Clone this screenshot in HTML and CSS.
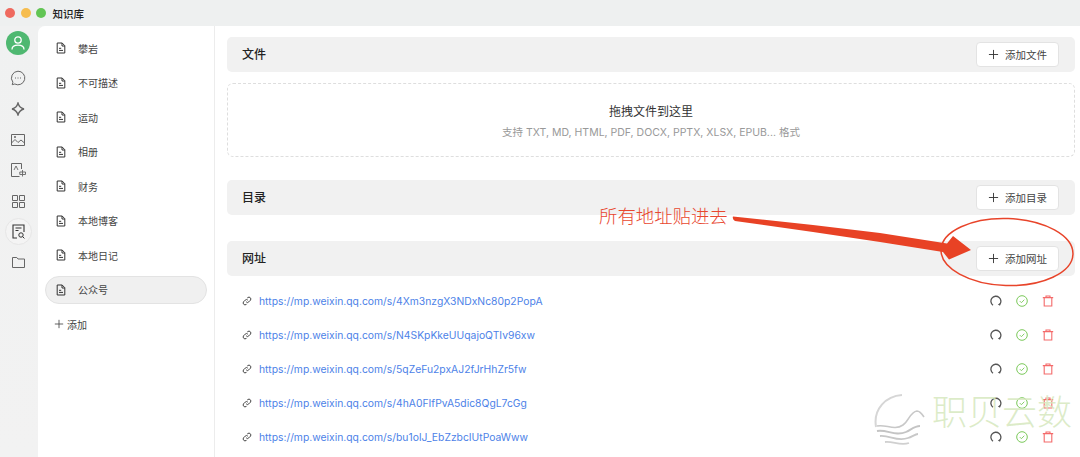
FILE: index.html
```html
<!DOCTYPE html>
<html lang="zh-CN">
<head>
    <meta charset="UTF-8">
    <meta name="viewport" content="width=device-width, initial-scale=1.0">
    <title>知识库</title>
    <link rel="stylesheet" href="styles.css">
</head>
<body>
    <svg width="0" height="0" class="defs">
        <symbol id="doc" viewBox="0 0 12 12">
            <path d="M2.200 1h5l2.600 2.700V11H2.200z M7 1v3h2.800 M4 6.300h2.200 M4 8.400h4" fill="none" stroke="currentColor" stroke-width="1"/>
        </symbol>
        <symbol id="plus" viewBox="0 0 12 12">
            <path d="M6 1v10M1 6h10" fill="none" stroke="currentColor" stroke-width="1"/>
        </symbol>
        <symbol id="link" viewBox="0 0 12 12">
            <path d="M5 7a2.200 2.200 0 0 0 3.200 0l2-2A2.300 2.300 0 0 0 7 1.800l-.8.8M7 5a2.200 2.200 0 0 0-3.200 0l-2 2A2.300 2.300 0 0 0 5 10.200l.8-.8" fill="none" stroke="currentColor" stroke-width="1.200"/>
        </symbol>
        <symbol id="retry" viewBox="0 0 12 12">
            <path d="M3 10.300A5 5 0 1 1 9.600 9.600" fill="none" stroke="currentColor" stroke-width="1.300"/>
            <path d="M7.800 9.400l2.300 1.300.3-2.600z" fill="currentColor"/>
        </symbol>
        <symbol id="ok" viewBox="0 0 12 12">
            <circle cx="6" cy="6" r="5.300" fill="none" stroke="currentColor" stroke-width="1"/>
            <path d="M3.800 6.100l1.600 1.600 2.900-3" fill="none" stroke="currentColor" stroke-width="0.900"/>
        </symbol>
        <symbol id="trash" viewBox="0 0 12 12">
            <path d="M.8 2.600h10.400M4 2.500V1h4v1.500M2.200 2.600V11h7.600V2.600" fill="none" stroke="currentColor" stroke-width="1.100"/>
        </symbol>
    </svg>

    <header class="titlebar">
        <span class="light red"></span>
        <span class="light yellow"></span>
        <span class="light green"></span>
        <span class="app-title">知识库</span>
    </header>

    <div class="app">
        <nav class="rail">
            <div class="avatar">
                <svg width="16" height="16" viewBox="0 0 16 16"><circle cx="8" cy="5" r="3.200" fill="none" stroke="#fff" stroke-width="1.300"/><path d="M2 14.500c0-3 2.500-4.300 6-4.300s6 1.300 6 4.300" fill="none" stroke="#fff" stroke-width="1.300"/></svg>
            </div>
            <div class="rail-btn">
                <svg width="16" height="16" viewBox="0 0 16 16"><path d="M8 1.200a6.800 6.800 0 1 1-3.200 12.800l-2.600.7.700-2.500A6.800 6.800 0 0 1 8 1.200z" fill="none" stroke="currentColor"/><path d="M5 8h1M7.500 8h1M10 8h1" stroke="currentColor"/></svg>
            </div>
            <div class="rail-btn">
                <svg width="14" height="14" viewBox="0 0 14 14"><path d="M7 1c.8 3 2.600 5.200 6 6-3.400.8-5.200 3-6 6-.8-3-2.600-5.200-6-6 3.400-.8 5.200-3 6-6z" fill="none" stroke="currentColor" stroke-width="1.300"/></svg>
            </div>
            <div class="rail-btn">
                <svg width="14" height="12" viewBox="0 0 14 12"><path d="M.5.500h13v11H.5z M.5 9l3.500-3.500 3 3 3-2.500 3.500 3" fill="none" stroke="currentColor"/><circle cx="4" cy="3" r="1" fill="currentColor"/></svg>
            </div>
            <div class="rail-btn">
                <svg width="15" height="14" viewBox="0 0 15 14"><path d="M10.500 6V.5H.5v13h8" fill="none" stroke="currentColor"/><path d="M3 7l2-4 2 4M11.500 7v6.500M8.800 9h5.700v2.500H8.800z" fill="none" stroke="currentColor" stroke-width="0.900"/></svg>
            </div>
            <div class="rail-btn">
                <svg width="13" height="13" viewBox="0 0 13 13"><path d="M.5.500h5v5h-5z M7.500.500h5v5h-5z M.5 7.500h5v5h-5z M7.500 7.500h5v5h-5z" fill="none" stroke="currentColor"/></svg>
            </div>
            <div class="rail-btn active">
                <svg width="13" height="15" viewBox="0 0 13 15"><path d="M5 14H1V1h11v7M3.500 4h6M3.500 6.500h3" fill="none" stroke="currentColor" stroke-width="1.100"/><circle cx="9" cy="11" r="2.200" fill="none" stroke="currentColor"/><path d="M10.600 12.600l1.800 1.800" stroke="currentColor"/></svg>
            </div>
            <div class="rail-btn">
                <svg width="13" height="11" viewBox="0 0 13 11"><path d="M.5.500h4.300l1.200 1.500h6.500v8.500H.5z" fill="none" stroke="currentColor"/></svg>
            </div>
        </nav>

        <aside class="sidebar">
            <div class="kb-item"><svg class="doc-icon"><use href="#doc"/></svg>攀岩</div>
            <div class="kb-item"><svg class="doc-icon"><use href="#doc"/></svg>不可描述</div>
            <div class="kb-item"><svg class="doc-icon"><use href="#doc"/></svg>运动</div>
            <div class="kb-item"><svg class="doc-icon"><use href="#doc"/></svg>相册</div>
            <div class="kb-item"><svg class="doc-icon"><use href="#doc"/></svg>财务</div>
            <div class="kb-item"><svg class="doc-icon"><use href="#doc"/></svg>本地博客</div>
            <div class="kb-item"><svg class="doc-icon"><use href="#doc"/></svg>本地日记</div>
            <div class="kb-item selected"><svg class="doc-icon"><use href="#doc"/></svg>公众号</div>
            <div class="kb-add"><svg class="add-icon"><use href="#plus"/></svg>添加</div>
        </aside>

        <main class="content">
            <section class="section-head">
                <h2>文件</h2>
                <button class="add-btn"><svg class="add-icon"><use href="#plus"/></svg>添加文件</button>
            </section>
            <div class="dropzone">
                <p class="drop-title">拖拽文件到这里</p>
                <p class="drop-hint">支持 TXT, MD, HTML, PDF, DOCX, PPTX, XLSX, EPUB... 格式</p>
            </div>

            <section class="section-head dir-head">
                <h2>目录</h2>
                <button class="add-btn"><svg class="add-icon"><use href="#plus"/></svg>添加目录</button>
            </section>

            <section class="section-head url-head">
                <h2>网址</h2>
                <button class="add-btn"><svg class="add-icon"><use href="#plus"/></svg>添加网址</button>
            </section>
            <ul class="url-list">
                <li class="url-row">
                    <svg class="link-icon"><use href="#link"/></svg>
                    <a class="url" href="#">https://mp.weixin.qq.com/s/4Xm3nzgX3NDxNc80p2PopA</a>
                    <svg class="act retry"><use href="#retry"/></svg>
                    <svg class="act ok"><use href="#ok"/></svg>
                    <svg class="act trash"><use href="#trash"/></svg>
                </li>
                <li class="url-row">
                    <svg class="link-icon"><use href="#link"/></svg>
                    <a class="url" href="#">https://mp.weixin.qq.com/s/N4SKpKkeUUqajoQTIv96xw</a>
                    <svg class="act retry"><use href="#retry"/></svg>
                    <svg class="act ok"><use href="#ok"/></svg>
                    <svg class="act trash"><use href="#trash"/></svg>
                </li>
                <li class="url-row">
                    <svg class="link-icon"><use href="#link"/></svg>
                    <a class="url" href="#">https://mp.weixin.qq.com/s/5qZeFu2pxAJ2fJrHhZr5fw</a>
                    <svg class="act retry"><use href="#retry"/></svg>
                    <svg class="act ok"><use href="#ok"/></svg>
                    <svg class="act trash"><use href="#trash"/></svg>
                </li>
                <li class="url-row">
                    <svg class="link-icon"><use href="#link"/></svg>
                    <a class="url" href="#">https://mp.weixin.qq.com/s/4hA0FIfPvA5dic8QgL7cGg</a>
                    <svg class="act retry"><use href="#retry"/></svg>
                    <svg class="act ok"><use href="#ok"/></svg>
                    <svg class="act trash"><use href="#trash"/></svg>
                </li>
                <li class="url-row">
                    <svg class="link-icon"><use href="#link"/></svg>
                    <a class="url" href="#">https://mp.weixin.qq.com/s/bu1olJ_EbZzbcIUtPoaWww</a>
                    <svg class="act retry"><use href="#retry"/></svg>
                    <svg class="act ok"><use href="#ok"/></svg>
                    <svg class="act trash"><use href="#trash"/></svg>
                </li>
            </ul>
        </main>
    </div>

    <!-- red note drawn over the screenshot -->
    <span class="note">所有地址贴进去</span>
    <svg class="overlay" width="1080" height="457" viewBox="0 0 1080 457">
        <ellipse cx="1007" cy="252" rx="66" ry="33.500" fill="none" stroke="#e8442a" stroke-width="1.500" transform="rotate(2 1007 252)"/>
        <path d="M733 216.500L813 225L880 233L947 243.500L953 236L971 250L949 259.500L943 252L880 242L813 232L735 221Q732 219 733 216.500z" fill="#e84225"/>
    </svg>

    <!-- watermark -->
    <div class="watermark">
        <svg class="wm-logo" width="52" height="58" viewBox="0 0 52 58">
            <circle cx="26" cy="29" r="26" fill="#fff" opacity="0.92"/>
            <path d="M2 34C-1 16 12 3 28 2" fill="none" stroke="#d6d6d6" stroke-width="2"/>
            <path d="M3 33c9-2 17 5 26-1 6-4 7-13 14-14 3 0 5 3 7 6" fill="none" stroke="#c8c8c8" stroke-width="1.600"/>
            <path d="M3 38c10-2 18 6 29 1 5-2 8-6 14-6" fill="none" stroke="#c4c4c4" stroke-width="1.800"/>
            <path d="M6 43c10-1 17 6 28 2 4-1 7-4 10-4" fill="none" stroke="#c8c8c8" stroke-width="1.800"/>
            <path d="M11 49c8-1 15 4 24 1" fill="none" stroke="#d0d0d0" stroke-width="1.800"/>
        </svg>
        <span class="wm-text">职贝云数</span>
    </div>
</body>
</html>
```

FILE: styles.css
```css
* {
    box-sizing: border-box;
}

body {
    margin: 0;
    width: 1080px;
    height: 457px;
    overflow: hidden;
    position: relative;
    font-family: "Inter", "Noto Sans CJK SC", sans-serif;
    background: #f1f2f2;
    color: #333;
}

.defs {
    position: absolute;
}

.titlebar {
    height: 26px;
    display: flex;
    align-items: center;
    padding-left: 5px;
    background: #eef0f0;
}

.light {
    width: 10px;
    height: 10px;
    border-radius: 50%;
    margin-right: 5.500px;
}

.light.red { background: #ef6a5f; }
.light.yellow { background: #f6bd4f; }
.light.green { background: #62c554; }

.app-title {
    margin-left: 1px;
    font-size: 10.500px;
    font-weight: 500;
    color: #222;
}

.app {
    display: flex;
    height: 431px;
}

.rail {
    width: 38px;
    flex: none;
    display: flex;
    flex-direction: column;
    align-items: center;
    padding: 5px 2px 0 0;
    background: linear-gradient(#f0f1f1, #f2f2f2);
    color: #666;
}

.avatar {
    width: 24px;
    height: 24px;
    border-radius: 50%;
    background: #4fb871;
    display: flex;
    align-items: center;
    justify-content: center;
    margin-bottom: 8px;
}

.rail-btn {
    width: 27px;
    height: 30.700px;
    display: flex;
    align-items: center;
    justify-content: center;
    flex: none;
}

.rail-btn.active {
    height: 27px;
    margin: 2px 0;
    border-radius: 50%;
    border: 1px solid #e6e6e6;
    background: #f4f4f4;
    color: #333;
}

.sidebar {
    width: 177px;
    flex: none;
    background: #fff;
    border-right: 1px solid #ececec;
    border-top-left-radius: 7px;
    padding: 8px 7px 0;
}

.kb-item {
    height: 28.500px;
    margin-bottom: 6px;
    display: flex;
    align-items: center;
    padding-left: 9px;
    border: 1px solid transparent;
    font-size: 10px;
    color: #444;
}

.kb-item.selected {
    background: #f0f0f0;
    border-color: #e3e3e3;
    border-radius: 14px;
}

.doc-icon {
    width: 12px;
    height: 12px;
    margin-right: 11px;
    color: #333;
    flex: none;
}

.kb-add {
    height: 28px;
    display: flex;
    align-items: center;
    font-size: 10px;
    color: #444;
    padding-left: 9px;
}

.add-icon {
    width: 10px;
    height: 10px;
    margin-right: 3px;
    flex: none;
}

.content {
    flex: 1;
    background: #fff;
    padding: 11px 5px 0 12px;
}

.section-head {
    height: 35px;
    display: flex;
    align-items: center;
    justify-content: space-between;
    padding: 0 16px 0 15px;
    background: #f1f1f1;
    border-radius: 5px;
}

.section-head h2 {
    margin: 0;
    font-size: 12px;
    font-weight: 500;
    color: #222;
    position: relative;
    top: -1px;
}

.dir-head {
    margin-top: 23px;
}

.url-head {
    margin-top: 26px;
}

.add-btn {
    width: 83px;
    height: 25px;
    display: flex;
    align-items: center;
    justify-content: center;
    padding: 0;
    background: #fff;
    border: 1px solid #e3e3e3;
    border-radius: 4px;
    font-family: inherit;
    font-size: 10.500px;
    color: #444;
}

.add-btn .add-icon {
    width: 11px;
    height: 11px;
    margin-right: 6px;
    color: #333;
}

.dropzone {
    height: 74px;
    margin-top: 11px;
    border: 1px dashed #dedede;
    border-radius: 6px;
    display: flex;
    flex-direction: column;
    align-items: center;
    justify-content: center;
    text-align: center;
}

.drop-title {
    margin: 0 0 5px;
    font-size: 12px;
    color: #333;
}

.drop-hint {
    margin: 0;
    font-size: 10.500px;
    color: #999;
}

.url-list {
    list-style: none;
    margin: 8px 0 0;
    padding: 0 21px 0 15px;
}

.url-row {
    height: 34px;
    display: flex;
    align-items: center;
}

.link-icon {
    width: 10px;
    height: 10px;
    margin-right: 7px;
    color: #444;
    flex: none;
}

.url {
    flex: 1;
    font-size: 10.350px;
    color: #4d82e8;
    text-decoration: none;
}

.act {
    width: 12px;
    height: 12px;
    margin-left: 14px;
    flex: none;
}

.act.retry { color: #555; }
.act.ok { color: #7bc95a; }
.act.trash { color: #f46a6a; }

.note {
    position: absolute;
    left: 599px;
    top: 203px;
    font-size: 18.400px;
    line-height: 26px;
    color: #e8472f;
    font-weight: 300;
}

.overlay {
    position: absolute;
    left: 0;
    top: 0;
    pointer-events: none;
}

.watermark {
    position: absolute;
    left: 874px;
    top: 393px;
    display: flex;
    align-items: flex-start;
}

.wm-logo {
    flex: none;
}

.wm-text {
    margin-left: 6px;
    font-size: 35px;
    line-height: 38px;
    font-weight: 300;
    color: rgba(214, 232, 190, 0.85);
    white-space: nowrap;
}
```
